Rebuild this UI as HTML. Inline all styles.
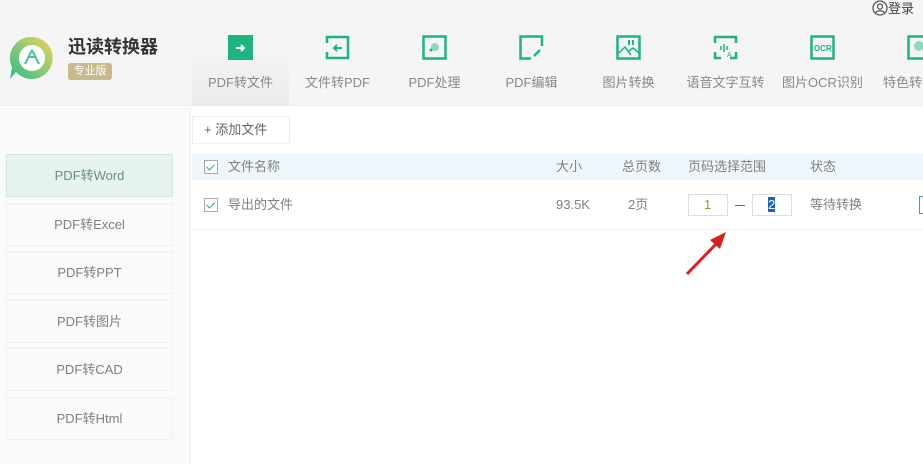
<!DOCTYPE html>
<html><head><meta charset="utf-8"><style>
*{margin:0;padding:0;box-sizing:border-box}
body{width:923px;height:464px;overflow:hidden;background:#fff;font-family:"Liberation Sans","Noto Sans CJK SC",sans-serif;position:relative;color:#666}
.hdr{position:absolute;left:0;top:0;width:923px;height:106px;background:#f5f5f5;border-bottom:1px solid #ececec}
.tab{position:absolute;top:30px;width:97px;height:76px;text-align:center;font-size:13px;color:#888}
.tab.on{background:linear-gradient(#f5f5f5,#ebebeb);top:45px;height:61px}
.tab svg{position:absolute;left:36px;top:5px}
.tab.on svg{top:-10px}
.tab span{position:absolute;left:-10px;right:-10px;top:45px;line-height:16px;white-space:nowrap}
.tab.on span{top:30px}
.side{position:absolute;left:0;top:107px;width:191px;height:357px;background:#fafafa;border-right:1px solid #eee}
.sb{position:absolute;left:6px;width:167px;height:43px;border:1px solid #f0f0f0;background:#fafafa;text-align:center;line-height:41px;font-size:13px;color:#808080}
.sb.on{background:#e7f3ef;border-color:#d5e6df;color:#6a8f80}
.cb{position:absolute;width:14px;height:14px;border:1px solid #aaa;background:#fff}
.cb:after{content:"";position:absolute;left:3px;top:1px;width:4px;height:7px;border:solid #2bb07a;border-width:0 1.5px 1.5px 0;transform:rotate(45deg)}
.t{position:absolute;font-size:13px;line-height:16px;color:#808080;white-space:nowrap}
</style></head><body>
<div class="hdr">
 <svg style="position:absolute;left:9px;top:35px" width="46" height="46" viewBox="0 0 46 46">
  <defs><linearGradient id="g" x1="0" y1="1" x2="1" y2="0"><stop offset="0" stop-color="#2bbf8a"/><stop offset="1" stop-color="#f2d25a"/></linearGradient></defs>
  <path d="M23 2a21 21 0 1 1-16 35l-6 7 2-12A21 21 0 0 1 23 2z" fill="url(#g)"/>
  <circle cx="23" cy="23" r="13" fill="#fff"/>
  <path d="M23 15l-7 14M23 15l7 14M20 22h6" stroke="#4cc39a" stroke-width="2" fill="none"/>
 </svg>
 <div style="position:absolute;left:68px;top:36px;font-size:18px;line-height:22px;font-weight:bold;color:#333">迅读转换器</div>
 <div style="position:absolute;left:68px;top:63px;width:44px;height:17px;background:#c8b98a;border-radius:3px;color:#fff;font-size:11px;text-align:center;line-height:17px">专业版</div>
 <div style="position:absolute;left:872px;top:0px;font-size:13px;line-height:17px;color:#444;white-space:nowrap"><svg width="16" height="16" viewBox="0 0 16 16" style="vertical-align:-3px"><circle cx="8" cy="8" r="7" stroke="#555" stroke-width="1.3" fill="none"/><circle cx="8" cy="6.5" r="2.5" stroke="#555" stroke-width="1.2" fill="none"/><path d="M3.5 13a5 4 0 0 1 9 0" stroke="#555" stroke-width="1.2" fill="none"/></svg>登录</div>
 <div class="tab on" style="left:192px"><svg width="25" height="25"><rect width="25" height="25" fill="#1db47e"/><path d="M8 13h8M13 10l3 3-3 3" stroke="#fff" stroke-width="2" fill="none"/></svg><span>PDF转文件</span></div>
 <div class="tab" style="left:289px"><svg width="25" height="25"><path d="M2 8V2h21v21H2v-6" stroke="#1db47e" stroke-width="2.5" fill="none"/><path d="M17 13H9M12 10l-3 3 3 3" stroke="#1db47e" stroke-width="2" fill="none"/></svg><span>文件转PDF</span></div>
 <div class="tab" style="left:386px"><svg width="25" height="25"><rect x="1.5" y="1.5" width="22" height="22" stroke="#1db47e" stroke-width="2.5" fill="none"/><circle cx="13" cy="12" r="4" fill="#8fd8bc"/><circle cx="9" cy="15" r="1.5" fill="#1db47e"/></svg><span>PDF处理</span></div>
 <div class="tab" style="left:483px"><svg width="25" height="25"><path d="M23 11V1.5H1.5v22H12" stroke="#1db47e" stroke-width="2.5" fill="none"/><path d="M15 21l6-6" stroke="#1db47e" stroke-width="2.5"/></svg><span>PDF编辑</span></div>
 <div class="tab" style="left:580px"><svg width="25" height="25"><rect x="1.5" y="1.5" width="22" height="22" stroke="#1db47e" stroke-width="2.5" fill="none"/><path d="M3 18l6-6 6 8M13 16l4-3 6 5" stroke="#1db47e" stroke-width="1.5" fill="none"/><path d="M13 5v5M17 5v5" stroke="#1db47e" stroke-width="2"/></svg><span>图片转换</span></div>
 <div class="tab" style="left:677px"><svg width="25" height="25"><path d="M2 8V2h21v6M2 17v6h6M23 17v6h-6" stroke="#1db47e" stroke-width="2.5" fill="none"/><path d="M8 11v4M11 9v8M14 11v4" stroke="#1db47e" stroke-width="1.5"/><text x="14" y="22" font-size="7" fill="#1db47e">A</text></svg><span>语音文字互转</span></div>
 <div class="tab" style="left:774px"><svg width="25" height="25"><rect x="1.5" y="1.5" width="22" height="22" stroke="#1db47e" stroke-width="2.5" fill="none"/><text x="4" y="16" font-size="8" font-weight="bold" fill="#1db47e">OCR</text></svg><span>图片OCR识别</span></div>
 <div class="tab" style="left:871px"><svg width="25" height="25"><rect x="1.5" y="1.5" width="22" height="22" stroke="#1db47e" stroke-width="2.5" fill="none"/><circle cx="12" cy="11" r="5" fill="#8fd8bc"/></svg><span style="left:12px;text-align:left">特色转换</span></div>
</div>
<div class="side">
 <div class="sb on" style="top:47px">PDF转Word</div>
 <div class="sb" style="top:96px">PDF转Excel</div>
 <div class="sb" style="top:144px">PDF转PPT</div>
 <div class="sb" style="top:193px">PDF转图片</div>
 <div class="sb" style="top:241px">PDF转CAD</div>
 <div class="sb" style="top:290px">PDF转Html</div>
</div>
<div style="position:absolute;left:192px;top:116px;width:98px;height:28px;border:1px solid #eee;background:#fff;font-size:13px;color:#666;line-height:26px;padding-left:11px">+ 添加文件</div>
<div style="position:absolute;left:192px;top:154px;width:731px;height:26px;background:#eef6fb"></div>
<div style="position:absolute;left:192px;top:229px;width:731px;height:1px;background:#eee"></div>
<div class="cb" style="left:204px;top:160px"></div>
<div class="t" style="left:228px;top:159px">文件名称</div>
<div class="t" style="left:556px;top:159px">大小</div>
<div class="t" style="left:622px;top:159px">总页数</div>
<div class="t" style="left:688px;top:159px">页码选择范围</div>
<div class="t" style="left:810px;top:159px">状态</div>
<div class="cb" style="left:204px;top:198px"></div>
<div class="t" style="left:228px;top:197px">导出的文件</div>
<div class="t" style="left:556px;top:197px">93.5K</div>
<div class="t" style="left:628px;top:197px">2页</div>
<div style="position:absolute;left:688px;top:194px;width:40px;height:22px;border:1px solid #ddd;font-size:13px;color:#7a3;line-height:20px;padding-left:15px">1</div>
<div style="position:absolute;left:735px;top:205px;width:10px;height:1px;background:#666"></div>
<div style="position:absolute;left:752px;top:194px;width:40px;height:22px;border:1px solid #ddd;line-height:20px;padding-left:15px;font-size:13px"><span style="background:#1565c0;color:#fff">2</span></div>
<div class="t" style="left:810px;top:197px">等待转换</div>
<div style="position:absolute;left:919px;top:196px;width:6px;height:18px;border:1px solid #2bb07a"></div>
<svg style="position:absolute;left:680px;top:228px" width="50" height="52"><path d="M7 46L38 14" stroke="#d9201c" stroke-width="3"/><path d="M46 4L30 12l10 9z" fill="#d9201c"/></svg>
</body></html>
